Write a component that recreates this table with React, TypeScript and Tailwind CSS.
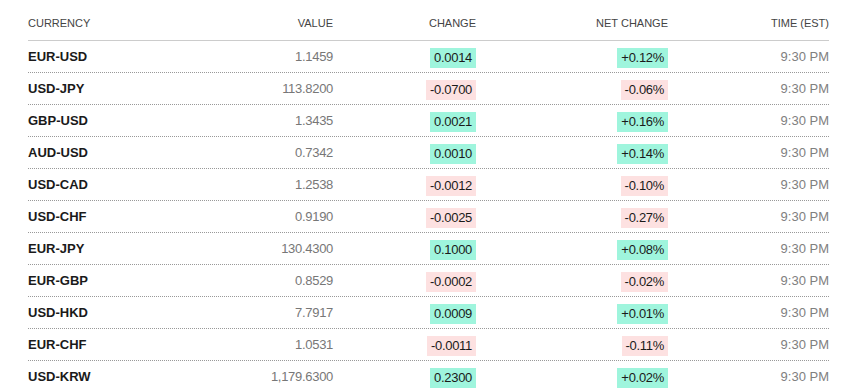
const rows = [
  { pair: "EUR-USD", value: "1.1459", change: "0.0014", net: "+0.12%", up: true },
  { pair: "USD-JPY", value: "113.8200", change: "-0.0700", net: "-0.06%", up: false },
  { pair: "GBP-USD", value: "1.3435", change: "0.0021", net: "+0.16%", up: true },
  { pair: "AUD-USD", value: "0.7342", change: "0.0010", net: "+0.14%", up: true },
  { pair: "USD-CAD", value: "1.2538", change: "-0.0012", net: "-0.10%", up: false },
  { pair: "USD-CHF", value: "0.9190", change: "-0.0025", net: "-0.27%", up: false },
  { pair: "EUR-JPY", value: "130.4300", change: "0.1000", net: "+0.08%", up: true },
  { pair: "EUR-GBP", value: "0.8529", change: "-0.0002", net: "-0.02%", up: false },
  { pair: "USD-HKD", value: "7.7917", change: "0.0009", net: "+0.01%", up: true },
  { pair: "EUR-CHF", value: "1.0531", change: "-0.0011", net: "-0.11%", up: false },
  { pair: "USD-KRW", value: "1,179.6300", change: "0.2300", net: "+0.02%", up: true },
];

const cols = "grid grid-cols-[162px_143px_143px_192px_161px]";

function Badge({ text, up }: { text: string; up: boolean }) {
  return (
    <span
      className={
        "inline-block h-5 px-1 leading-5 text-[13px] tracking-[-0.3px] text-[#1a1a1a] " +
        (up ? "bg-[#9ff5dd]" : "bg-[#fde1e1]")
      }
    >
      {text}
    </span>
  );
}

export default function App() {
  return (
    <div className="w-[848px] h-[390px] overflow-hidden bg-white font-['Liberation_Sans',Arial,sans-serif]">
      <div className="ml-[28px] w-[801px]">
        {/* header */}
        <div className={cols + " pt-[17px] h-[41px] border-b border-[#cccccc] text-[11px] leading-[13px] text-[#444444]"}>
          <div>CURRENCY</div>
          <div className="text-right">VALUE</div>
          <div className="text-right">CHANGE</div>
          <div className="text-right">NET CHANGE</div>
          <div className="text-right">TIME (EST)</div>
        </div>

        {rows.map((r) => (
          <div
            key={r.pair}
            className={cols + " h-8 items-center border-b border-dotted border-[#999999]"}
          >
            <div className="text-[13px] font-bold text-[#1a1a1a]">{r.pair}</div>
            <div className="text-right text-[13px] tracking-[-0.3px] text-[#777777]">{r.value}</div>
            <div className="text-right">
              <Badge text={r.change} up={r.up} />
            </div>
            <div className="text-right">
              <Badge text={r.net} up={r.up} />
            </div>
            <div className="text-right text-[13px] text-[#808080]">9:30 PM</div>
          </div>
        ))}
      </div>
    </div>
  );
}
